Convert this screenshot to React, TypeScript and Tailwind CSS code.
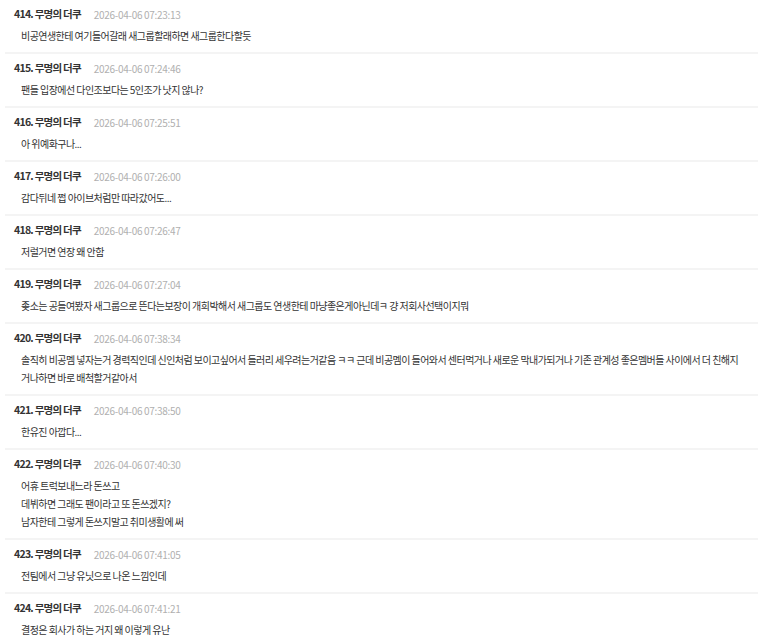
const posts = [
  { no: 414, date: '2026-04-06 07:23:13', lines: ['비공연생한테 여기들어갈래 새그룹할래하면 새그룹한다할듯'] },
  { no: 415, date: '2026-04-06 07:24:46', lines: ['팬들 입장에선 다인조보다는 5인조가 낫지 않나?'] },
  { no: 416, date: '2026-04-06 07:25:51', lines: ['아 위예화구나...'] },
  { no: 417, date: '2026-04-06 07:26:00', lines: ['감다뒤네 쩝 아이브처럼만 따라갔어도...'] },
  { no: 418, date: '2026-04-06 07:26:47', lines: ['저럴거면 연장 왜 안함'] },
  { no: 419, date: '2026-04-06 07:27:04', lines: ['좆소는 공들여봤자 새그룹으로 뜬다는보장이 개희박해서 새그룹도 연생한테 마냥좋은게아닌데ㅋ 걍 저회사선택이지뭐'] },
  {
    no: 420,
    date: '2026-04-06 07:38:34',
    lines: [
      '솔직히 비공멤 넣자는거 경력직인데 신인처럼 보이고싶어서 들러리 세우려는거같음 ㅋㅋ 근데 비공멤이 들어와서 센터먹거나 새로운 막내가되거나 기존 관계성 좋은멤버들 사이에서 더 친해지거나하면 바로 배척할거같아서',
    ],
  },
  { no: 421, date: '2026-04-06 07:38:50', lines: ['한유진 아깝다...'] },
  {
    no: 422,
    date: '2026-04-06 07:40:30',
    lines: ['어휴 트럭보내느라 돈쓰고', '데뷔하면 그래도 팬이라고 또 돈쓰겠지?', '남자한테 그렇게 돈쓰지말고 취미생활에 써'],
  },
  { no: 423, date: '2026-04-06 07:41:05', lines: ['전팀에서 그냥 유닛으로 나온 느낌인데'] },
  { no: 424, date: '2026-04-06 07:41:21', lines: ['결정은 회사가 하는 거지 왜 이렇게 유난'] },
]

export default function App() {
  return (
    <div className="min-h-[640px] bg-white font-['Noto_Sans_CJK_KR','Noto_Sans',sans-serif] text-[#333]">
      <div className="ml-[5px] w-[753px]">
        {posts.map((p) => (
          <div key={p.no} className="border-b-2 border-[#f4f4f4] pt-[6px] pb-[7px]">
            <div className="flex h-4 items-center pl-[9px]">
              <span className="text-[10.5px] font-bold tracking-[-0.75px] text-[#333]">{p.no}. 무명의 더쿠</span>
              <span className="ml-[13px] text-[10px] tracking-[-0.3px] text-[#b0b0b0]">{p.date}</span>
            </div>
            <div className="mt-[5px] pl-4 pr-[16px]">
              {p.lines.map((l, i) => (
                <p key={i} className="text-[10px] leading-[18px] tracking-[-0.55px] text-[#333]">
                  {l}
                </p>
              ))}
            </div>
          </div>
        ))}
      </div>
    </div>
  )
}
